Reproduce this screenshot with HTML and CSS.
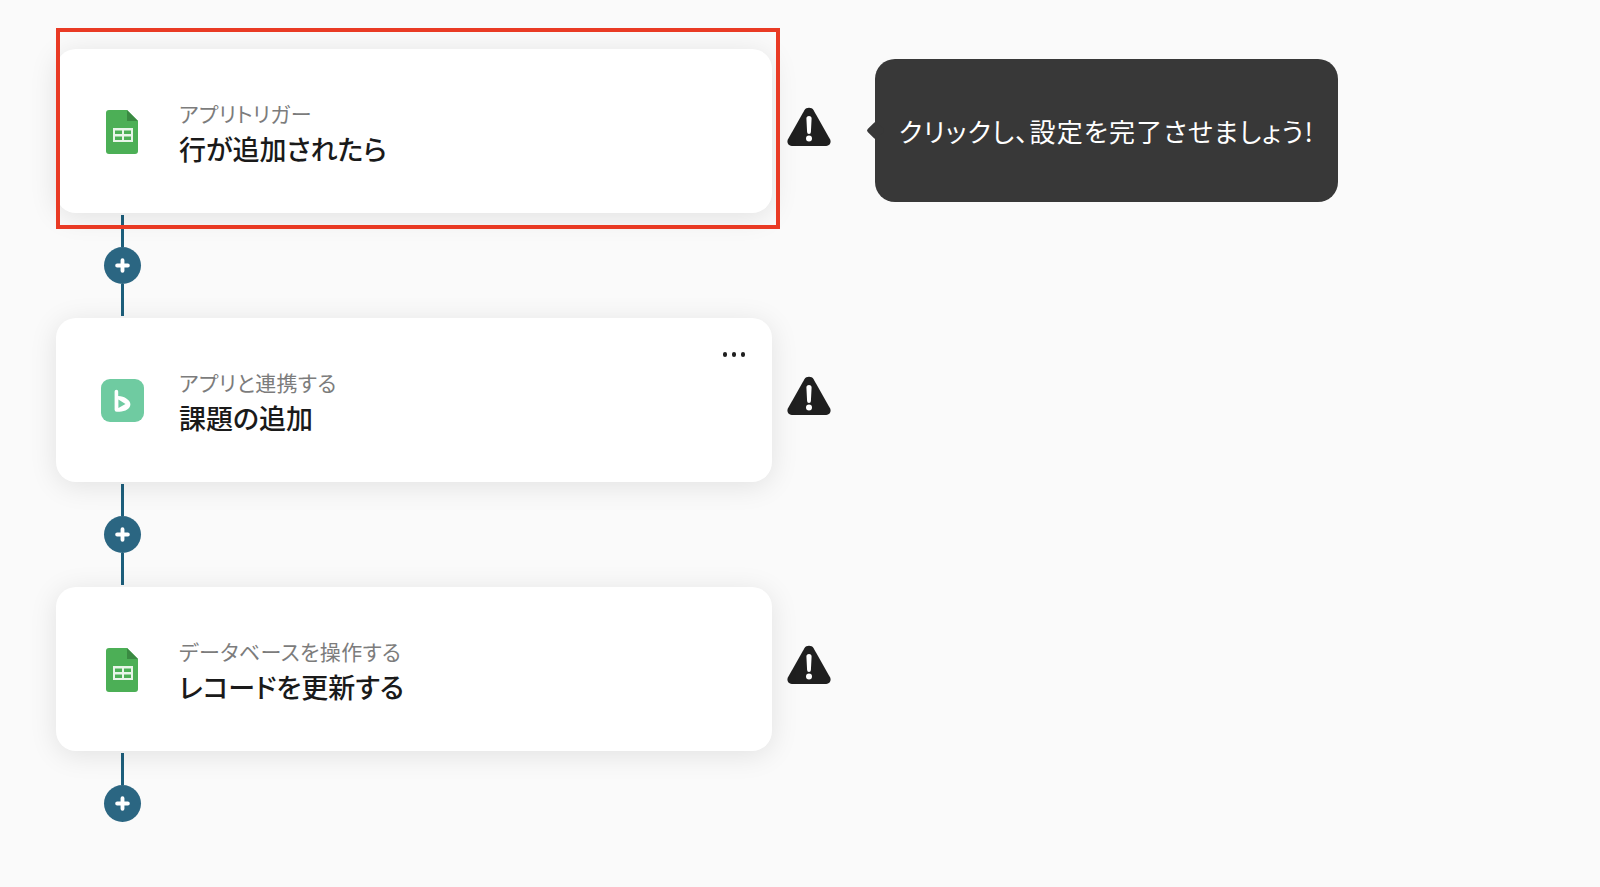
FILE: index.html
```html
<!DOCTYPE html>
<html lang="ja">
<head>
<meta charset="utf-8">
<title>フロー</title>
<link rel="stylesheet" href="styles.css">
</head>
<body>
<main class="flow">
  <section class="step">
    <div class="card">
      <span class="highlight"></span>
      <div class="card-icon">
        <svg class="sheet" viewBox="0 0 32 44"><path d="M3 0H21L32 11V41a3 3 0 0 1-3 3H3a3 3 0 0 1-3-3V3a3 3 0 0 1 3-3Z" fill="#4caf56"/><path d="M21 0L32 11H21Z" fill="#3a8a42"/><path d="M7 18H27V32H7ZM9 20.5V24H16V20.5ZM18 20.5V24H25V20.5ZM9 26.5V30H16V26.5ZM18 26.5V30H25V26.5Z" fill="#e8f5e9" fill-rule="evenodd"/></svg>
      </div>
      <div class="card-text">
        <p class="label">アプリトリガー</p>
        <p class="title">行が追加されたら</p>
      </div>
    </div>
    <svg class="warn" viewBox="0 0 44 39"><path d="M17.4 3.2a5.4 5.4 0 0 1 9.2 0L43 32.3A4.5 4.5 0 0 1 39.2 39H4.8A4.5 4.5 0 0 1 1 32.3Z" fill="#1f1f1f"/><path d="M19.4 11.5a2.6 2.6 0 0 1 5.2 0L23.9 25a1.9 1.9 0 0 1-3.8 0Z" fill="#fff"/><circle cx="22" cy="31.5" r="3" fill="#fff"/></svg>
    <div class="tooltip">クリックし、設定を完了させましょう!</div>
  </section>
  <div class="connector">
    <span class="line line-top"></span>
    <span class="add"><svg viewBox="0 0 14 14"><path d="M7 2V12M2 7H12" stroke="#fff" stroke-width="3.6" stroke-linecap="round"/></svg></span>
    <span class="line line-fill"></span>
  </div>
  <section class="step">
    <div class="card">
      <div class="dots"><i></i><i></i><i></i></div>
      <div class="card-icon">
        <svg class="bubble" viewBox="0 0 43 43"><rect width="43" height="43" rx="9" fill="#6fcba1"/><path d="M13.6 12.6a1.8 1.8 0 0 1 3.6 0V16.9C23.5 17 29.4 21 29.4 25.3C29.4 29.5 24.5 32.7 18.5 32.7H15.6a2 2 0 0 1-2-2ZM17.4 20.6V29L24.5 25Z" fill="#fff" fill-rule="evenodd"/></svg>
      </div>
      <div class="card-text">
        <p class="label">アプリと連携する</p>
        <p class="title">課題の追加</p>
      </div>
    </div>
    <svg class="warn" viewBox="0 0 44 39"><path d="M17.4 3.2a5.4 5.4 0 0 1 9.2 0L43 32.3A4.5 4.5 0 0 1 39.2 39H4.8A4.5 4.5 0 0 1 1 32.3Z" fill="#1f1f1f"/><path d="M19.4 11.5a2.6 2.6 0 0 1 5.2 0L23.9 25a1.9 1.9 0 0 1-3.8 0Z" fill="#fff"/><circle cx="22" cy="31.5" r="3" fill="#fff"/></svg>
  </section>
  <div class="connector">
    <span class="line line-top"></span>
    <span class="add"><svg viewBox="0 0 14 14"><path d="M7 2V12M2 7H12" stroke="#fff" stroke-width="3.6" stroke-linecap="round"/></svg></span>
    <span class="line line-fill"></span>
  </div>
  <section class="step">
    <div class="card">
      <div class="card-icon">
        <svg class="sheet" viewBox="0 0 32 44"><path d="M3 0H21L32 11V41a3 3 0 0 1-3 3H3a3 3 0 0 1-3-3V3a3 3 0 0 1 3-3Z" fill="#4caf56"/><path d="M21 0L32 11H21Z" fill="#3a8a42"/><path d="M7 18H27V32H7ZM9 20.5V24H16V20.5ZM18 20.5V24H25V20.5ZM9 26.5V30H16V26.5ZM18 26.5V30H25V26.5Z" fill="#e8f5e9" fill-rule="evenodd"/></svg>
      </div>
      <div class="card-text">
        <p class="label">データベースを操作する</p>
        <p class="title">レコードを更新する</p>
      </div>
    </div>
    <svg class="warn" viewBox="0 0 44 39"><path d="M17.4 3.2a5.4 5.4 0 0 1 9.2 0L43 32.3A4.5 4.5 0 0 1 39.2 39H4.8A4.5 4.5 0 0 1 1 32.3Z" fill="#1f1f1f"/><path d="M19.4 11.5a2.6 2.6 0 0 1 5.2 0L23.9 25a1.9 1.9 0 0 1-3.8 0Z" fill="#fff"/><circle cx="22" cy="31.5" r="3" fill="#fff"/></svg>
  </section>
  <div class="connector connector-end">
    <span class="line line-top"></span>
    <span class="add"><svg viewBox="0 0 14 14"><path d="M7 2V12M2 7H12" stroke="#fff" stroke-width="3.6" stroke-linecap="round"/></svg></span>
  </div>
</main>
</body>
</html>
```

FILE: styles.css
```css
* { box-sizing: border-box; }

html, body {
  margin: 0;
  height: 100%;
  overflow: hidden;
  background: #fafafa;
}

body {
  font-family: "Noto Sans CJK JP", "Noto Sans", sans-serif;
  font-feature-settings: "palt";
}

.flow {
  display: flex;
  flex-direction: column;
  padding: 49px 0 0 56px;
}

.step {
  display: flex;
  align-items: flex-start;
  height: 164px;
}

.card {
  position: relative;
  display: flex;
  align-items: center;
  flex: none;
  width: 716px;
  height: 164px;
  padding-left: 44px;
  border-radius: 20px;
  background: #fff;
  box-shadow: 0 4px 28px rgba(0, 0, 0, 0.1);
}

.highlight {
  position: absolute;
  top: -21.5px;
  left: 0;
  width: 724px;
  height: 201px;
  border: 4.5px solid #e93a24;
}

.card-icon {
  display: flex;
  flex: none;
  align-items: center;
  justify-content: center;
  width: 44px;
  height: 44px;
  margin-right: 35px;
}

.sheet { width: 32px; height: 44px; flex: none; margin-top: 2px; }
.bubble { width: 43px; height: 43px; flex: none; }

.card-text {
  display: flex;
  flex-direction: column;
  gap: 3px;
  padding-top: 3px;
}

.label {
  margin: 0;
  font-size: 21px;
  line-height: 29px;
  letter-spacing: 0.4px;
  color: #7c7c7c;
}

.title {
  margin: 0;
  font-size: 27px;
  line-height: 36px;
  font-weight: 500;
  color: #1a1a1a;
}

.dots {
  position: absolute;
  top: 34px;
  right: 27px;
  display: flex;
  gap: 4.5px;
}

.dots i {
  width: 4.5px;
  height: 4.5px;
  border-radius: 50%;
  background: #1f1f1f;
}

.warn {
  flex: none;
  width: 44px;
  height: 39px;
  margin: 58px 0 0 15px;
}

.tooltip {
  position: relative;
  display: flex;
  align-items: center;
  justify-content: center;
  flex: none;
  width: 463px;
  height: 143px;
  margin: 10px 0 0 44px;
  border-radius: 20px;
  background: #383838;
  color: #fff;
  font-size: 26px;
  letter-spacing: 1.2px;
}

.tooltip::before {
  content: "";
  position: absolute;
  top: 65px;
  left: -6px;
  width: 13px;
  height: 13px;
  border-radius: 2px;
  background: #383838;
  transform: rotate(45deg);
}

.connector {
  display: flex;
  flex-direction: column;
  align-items: center;
  width: 37px;
  height: 105px;
  margin-left: 47.5px;
  padding: 2px 0;
}

.connector-end { height: 72px; padding-bottom: 0; }

.line {
  display: block;
  flex: none;
  width: 3px;
  background: #1d5f7c;
}

.line-top { height: 32px; }
.line-fill { flex: 1; }

.add {
  display: flex;
  flex: none;
  align-items: center;
  justify-content: center;
  width: 37px;
  height: 37px;
  border-radius: 50%;
  background: #2b6682;
}

.add svg { width: 15px; height: 15px; }
```
